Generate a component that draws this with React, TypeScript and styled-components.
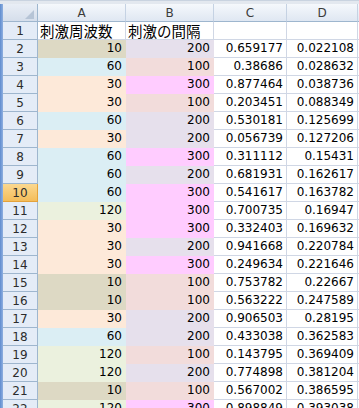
import React from "react";
import styled, {createGlobalStyle} from "styled-components";

const GlobalStyle = createGlobalStyle`
  html, body {
    margin: 0;
    padding: 0;
    background: #ffffff;
    overflow: hidden;
  }
`;

type Row = { a: number; b: number; c: string; d: string };

const rows: Row[] = [
    {a: 10, b: 200, c: "0.659177", d: "0.022108"},
    {a: 60, b: 100, c: "0.38686", d: "0.028632"},
    {a: 30, b: 300, c: "0.877464", d: "0.038736"},
    {a: 30, b: 100, c: "0.203451", d: "0.088349"},
    {a: 60, b: 200, c: "0.530181", d: "0.125699"},
    {a: 30, b: 200, c: "0.056739", d: "0.127206"},
    {a: 60, b: 300, c: "0.311112", d: "0.15431"},
    {a: 60, b: 200, c: "0.681931", d: "0.162617"},
    {a: 60, b: 300, c: "0.541617", d: "0.163782"},
    {a: 120, b: 300, c: "0.700735", d: "0.16947"},
    {a: 30, b: 300, c: "0.332403", d: "0.169632"},
    {a: 30, b: 200, c: "0.941668", d: "0.220784"},
    {a: 30, b: 300, c: "0.249634", d: "0.221646"},
    {a: 10, b: 100, c: "0.753782", d: "0.22667"},
    {a: 10, b: 100, c: "0.563222", d: "0.247589"},
    {a: 30, b: 200, c: "0.906503", d: "0.28195"},
    {a: 60, b: 200, c: "0.433038", d: "0.362583"},
    {a: 120, b: 100, c: "0.143795", d: "0.369409"},
    {a: 120, b: 200, c: "0.774898", d: "0.381204"},
    {a: 10, b: 100, c: "0.567002", d: "0.386595"},
    {a: 120, b: 300, c: "0.898849", d: "0.393038"},
];

// fills used in the sheet, keyed by cell value
const freqFill: Record<number, string> = {
    10: "#ddd9c4",
    30: "#fde9d9",
    60: "#dbeef4",
    120: "#ebf1de",
};

const gapFill: Record<number, string> = {
    100: "#f2dcdb",
    200: "#e6e0ec",
    300: "#ffccff",
};

const ACTIVE_ROW = 10;

const Window = styled.div`
  width: 359px;
  height: 408px;
  display: flex;
  flex-direction: column;
  overflow: hidden;
  background: #ffffff;
`;

const TopStrip = styled.div`
  height: 4px;
  flex: none;
  background: #e3e8ef;
  border-top: 1px solid #c9d3e0;
  box-sizing: border-box;
`;

const Body = styled.div`
  flex: 1;
  display: flex;
  min-height: 0;
`;

const LeftStrip = styled.div`
  width: 3px;
  flex: none;
  background: linear-gradient(90deg, #5f8ccf, #8fb0e0);
`;

const Sheet = styled.div`
  flex: 1;
  display: grid;
  grid-template-columns: 35px 88px 88px 73px 71px 1fr;
  grid-auto-rows: 18px;
  font-family: "DejaVu Sans", "Noto Sans CJK JP", sans-serif;
  font-size: 12px;
  color: #000000;
`;

const Corner = styled.div`
  box-sizing: border-box;
  position: relative;
  background: linear-gradient(#e9eef6, #d5deeb);
  border-right: 1px solid #9eb6ce;
  border-bottom: 1px solid #9eb6ce;
`;

const CornerMark = styled.svg`
  position: absolute;
  right: 3px;
  bottom: 2px;
`;

const ColHead = styled.div`
  box-sizing: border-box;
  display: flex;
  align-items: center;
  justify-content: center;
  background: linear-gradient(#f5f8fc, #dfe7f2);
  border-right: 1px solid #c5d2e3;
  border-bottom: 1px solid #9eb6ce;
  color: #3b3b3b;
  padding-top: 1px;
`;

const RowHead = styled.div<{ $active?: boolean }>`
  box-sizing: border-box;
  display: flex;
  align-items: center;
  justify-content: center;
  background: ${({$active}) => $active ? "linear-gradient(#fbd890, #f4bd5a)" : "#e4ecf7"};
  border-right: 1px solid ${({$active}) => $active ? "#e4a23a" : "#9eb6ce"};
  border-bottom: 1px solid ${({$active}) => $active ? "#e4a23a" : "#9eb6ce"};
  color: #2c2c2c;
  padding-top: 1px;
`;

const Cell = styled.div<{ $fill?: string }>`
  box-sizing: border-box;
  display: flex;
  align-items: flex-end;
  justify-content: flex-end;
  padding: 0 3px 2px 0;
  background: ${({$fill}) => $fill || "#ffffff"};
  border-right: 1px solid ${({$fill}) => $fill || "#d0d7e5"};
  border-bottom: 1px solid ${({$fill}) => $fill || "#d0d7e5"};
  white-space: nowrap;
`;

const LabelCell = styled(Cell)`
  justify-content: flex-start;
  align-items: center;
  padding: 0 0 0 2px;
  font-family: "Noto Sans CJK JP", sans-serif;
  font-size: 14.5px;
  line-height: 17px;
`;

export default function App() {
    return (
        <>
            <GlobalStyle/>
            <Window>
                <TopStrip/>
                <Body>
                    <LeftStrip/>
                    <Sheet>
                        <Corner>
                            <CornerMark width="9" height="9" viewBox="0 0 9 9">
                                <polygon points="9,0 9,9 0,9" fill="#b6c4d6"/>
                            </CornerMark>
                        </Corner>
                        <ColHead>A</ColHead>
                        <ColHead>B</ColHead>
                        <ColHead>C</ColHead>
                        <ColHead>D</ColHead>
                        <ColHead/>

                        <RowHead>1</RowHead>
                        <LabelCell>刺激周波数</LabelCell>
                        <LabelCell>刺激の間隔</LabelCell>
                        <Cell/>
                        <Cell/>
                        <Cell/>

                        {rows.map((row, i) => {
                            const n = i + 2;
                            return (
                                <React.Fragment key={n}>
                                    <RowHead $active={n === ACTIVE_ROW}>{n}</RowHead>
                                    <Cell $fill={freqFill[row.a]}>{row.a}</Cell>
                                    <Cell $fill={gapFill[row.b]}>{row.b}</Cell>
                                    <Cell>{row.c}</Cell>
                                    <Cell>{row.d}</Cell>
                                    <Cell/>
                                </React.Fragment>
                            );
                        })}
                    </Sheet>
                </Body>
            </Window>
        </>
    );
}
